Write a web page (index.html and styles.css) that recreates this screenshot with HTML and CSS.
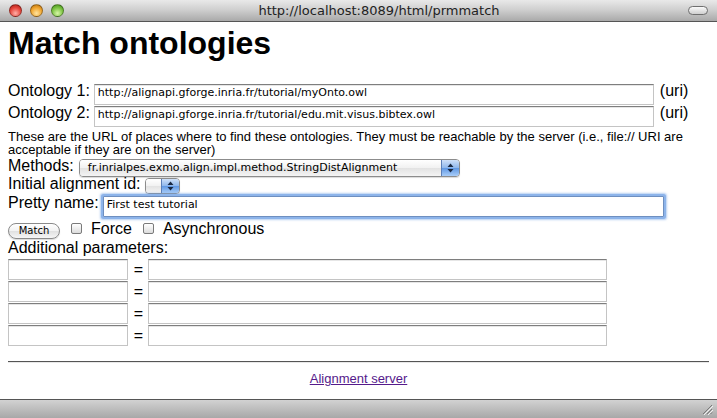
FILE: index.html
```html
<!DOCTYPE html>
<html lang="en">
<head>
    <meta charset="UTF-8">
    <meta name="viewport" content="width=device-width, initial-scale=1.0">
    <title>Match ontologies</title>
    <link rel="stylesheet" href="styles.css">
</head>
<body>
    <div class="window">
        <div class="titlebar">
            <div class="lights">
                <span class="light red"></span>
                <span class="light amber"></span>
                <span class="light green"></span>
            </div>
            <div class="title">http://localhost:8089/html/prmmatch</div>
            <span class="pill"></span>
        </div>

        <div class="page">
            <h1>Match ontologies</h1>
            <form class="match-form">
                <div class="field">
                    <label for="onto1">Ontology 1:</label>
                    <input class="text uri" id="onto1" value="http://alignapi.gforge.inria.fr/tutorial/myOnto.owl">
                    <span class="uri-hint">(uri)</span>
                </div>
                <div class="field">
                    <label for="onto2">Ontology 2:</label>
                    <input class="text uri" id="onto2" value="http://alignapi.gforge.inria.fr/tutorial/edu.mit.visus.bibtex.owl">
                    <span class="uri-hint">(uri)</span>
                </div>
                <p class="help">These are the URL of places where to find these ontologies. They must be reachable by the server (i.e., file:// URI are acceptable if they are on the server)</p>

                <div class="field methods-row">
                    <label>Methods:</label>
                    <div class="popup popup-methods">
                        <span class="popup-text">fr.inrialpes.exmo.align.impl.method.StringDistAlignment</span>
                        <span class="popup-arrows">
                            <svg width="7" height="10" viewBox="0 0 7 10"><path d="M3.5 0.5 L6.5 4 H0.5 Z M3.5 9.5 L6.5 6 H0.5 Z" fill="#1b2a44"/></svg>
                        </span>
                    </div>
                </div>
                <div class="field init-row">
                    <label>Initial alignment id:</label>
                    <div class="popup popup-small">
                        <span class="popup-text">&nbsp;</span>
                        <span class="popup-arrows">
                            <svg width="7" height="10" viewBox="0 0 7 10"><path d="M3.5 0.5 L6.5 4 H0.5 Z M3.5 9.5 L6.5 6 H0.5 Z" fill="#1b2a44"/></svg>
                        </span>
                    </div>
                </div>
                <div class="field pretty-row">
                    <label for="pretty">Pretty name:</label>
                    <input class="text pretty focused" id="pretty" value="First test tutorial">
                </div>
                <div class="field match-row">
                    <button type="submit" class="match-btn">Match</button>
                    <span class="checkbox"></span>
                    <span class="check-label">Force</span>
                    <span class="checkbox"></span>
                    <span class="check-label">Asynchronous</span>
                </div>
                <div class="params-title">Additional parameters:</div>
                <div class="params">
                    <input class="text param-key"><span class="eq">=</span><input class="text param-value">
                    <input class="text param-key"><span class="eq">=</span><input class="text param-value">
                    <input class="text param-key"><span class="eq">=</span><input class="text param-value">
                    <input class="text param-key"><span class="eq">=</span><input class="text param-value">
                </div>
            </form>
            <hr class="rule">
            <p class="footer"><a href="#">Alignment server</a></p>
        </div>

        <div class="statusbar">
            <svg class="grip" width="12" height="12" viewBox="0 0 12 12">
                <path d="M11 2 L2 11 M11 6 L6 11 M11 9.5 L9.5 11" stroke="#7a7a7a" stroke-width="1"/>
                <path d="M12 3 L3 12 M12 7 L7 12" stroke="#f0f0f0" stroke-width="1"/>
            </svg>
        </div>
    </div>
</body>
</html>
```

FILE: styles.css
```css
* {
    box-sizing: border-box;
}

body {
    margin: 0;
    font-family: "Liberation Sans", Arial, sans-serif;
    font-size: 16px;
    color: #000;
    background-color: #fff;
}

.window {
    width: 717px;
    height: 418px;
    display: flex;
    flex-direction: column;
    overflow: hidden;
}

/* title bar */
.titlebar {
    height: 22px;
    display: flex;
    align-items: center;
    padding: 0 9px 0 9px;
    background: linear-gradient(#e9e9e9, #d0d0d0 45%, #a9a9a9);
    border-bottom: 1px solid #555;
}

.lights {
    display: flex;
    gap: 8px;
}

.light {
    width: 13px;
    height: 13px;
    border-radius: 50%;
    border: 1px solid rgba(0, 0, 0, 0.35);
}

.light.red {
    background: radial-gradient(circle at 50% 75%, #ffb0a8, #e6463c 55%, #a61a12);
}

.light.amber {
    background: radial-gradient(circle at 50% 75%, #ffe4a0, #f0a630 55%, #b46b0a);
}

.light.green {
    background: radial-gradient(circle at 50% 75%, #d8f6a8, #7cc443 55%, #3f8a17);
}

.title {
    flex: 1;
    text-align: center;
    font-family: "DejaVu Sans", sans-serif;
    font-size: 13px;
    color: #222;
    padding-left: 6px;
}

.pill {
    width: 20px;
    height: 9px;
    border-radius: 5px;
    border: 1px solid #6f6f6f;
    background: linear-gradient(#fafafa, #cfcfcf);
}

/* page */
.page {
    flex: 1;
    padding: 0 8px;
    overflow: hidden;
}

h1 {
    font-size: 32px;
    line-height: 36px;
    margin: 3px 0 0;
}

.match-form {
    margin-top: 21px;
}

.field {
    display: flex;
    align-items: baseline;
    gap: 4px;
    height: 22px;
}

.field label,
.check-label,
.uri-hint,
.params-title {
    line-height: 18px;
}

.uri-hint {
    margin-left: 2px;
}

.text {
    height: 21px;
    padding: 0 3px 4px;
    font-family: "DejaVu Sans", sans-serif;
    font-size: 11px;
    color: #000;
    background: #fff;
    border: 1px solid #c4c4c4;
    border-top-color: #7e7e7e;
    box-shadow: inset 0 1px 0 #e6e6e6;
    border-radius: 0;
    outline: none;
}

.uri {
    width: 560px;
}

.help {
    margin: 4px 0 0;
    font-size: 13px;
    line-height: 13.3px;
}

.methods-row {
    height: 18px;
}

.init-row {
    height: 19px;
}

.pretty-row {
    height: 26px;
}

.match-row {
    height: 19px;
    gap: 0;
}

/* select popups */
.popup {
    display: inline-flex;
    border: 1px solid #8c8c8c;
    border-radius: 4px;
    overflow: hidden;
    box-shadow: 0 1px 1px rgba(0, 0, 0, 0.15);
}

.popup-text {
    flex: 1;
    font-family: "DejaVu Sans", sans-serif;
    font-size: 11px;
    line-height: 16px;
    padding: 0 8px;
    white-space: nowrap;
    background: linear-gradient(#ffffff, #f1f1f1 50%, #e2e2e2 51%, #f4f4f4);
}

.popup-arrows {
    width: 18px;
    display: flex;
    align-items: center;
    justify-content: center;
    border-left: 1px solid #5c7fb8;
    background: linear-gradient(#cfe0f8, #8db6ec 50%, #5f97e3 51%, #a9cdf8);
}

.popup-methods {
    width: 381px;
    height: 18px;
    margin-left: 1px;
}

.popup-small {
    width: 35px;
    height: 16px;
}

.popup-small .popup-text {
    line-height: 14px;
    padding: 0 4px;
}

.pretty {
    width: 561px;
}

.focused {
    border-color: #6e8fc0;
    box-shadow: 0 0 0 2px #8db4ea, 0 0 2px 3px rgba(110, 160, 230, 0.5);
    border-radius: 1px;
}

/* match row */
.match-btn {
    align-self: center;
    margin-top: 3px;
    width: 52px;
    height: 16px;
    padding: 0;
    font-family: "DejaVu Sans", sans-serif;
    font-size: 10px;
    color: #000;
    border: 1px solid #8a8a8a;
    border-radius: 8px;
    background: linear-gradient(#ffffff, #f2f2f2 50%, #e0e0e0 51%, #f6f6f6);
    box-shadow: 0 1px 1px rgba(0, 0, 0, 0.15);
}

.checkbox {
    align-self: flex-start;
    margin-top: 3px;
    width: 11px;
    height: 11px;
    border: 1px solid #7a7a7a;
    border-radius: 2px;
    background: linear-gradient(#ffffff, #dcdcdc);
}

.match-btn + .checkbox {
    margin-left: 11px;
}

.checkbox + .check-label {
    margin-left: 9px;
}

.check-label + .checkbox {
    margin-left: 11px;
}

.params-title {
    height: 18px;
}

/* additional parameters */
.params {
    margin-top: 2.6px;
    display: grid;
    grid-template-columns: 120px 20px 459px;
    grid-auto-rows: 21px;
    row-gap: 1px;
}

.param-key,
.param-value {
    width: 100%;
}

.eq {
    text-align: center;
    line-height: 21px;
    padding-left: 1px;
}

.rule {
    margin: 15px 0 0;
    border: 0;
    border-top: 1px solid #555;
    border-bottom: 1px solid #e8e8e8;
}

.footer {
    margin: 8px 0 0;
    text-align: center;
    font-size: 13px;
    line-height: 15px;
}

.footer a {
    color: #551a8b;
}

/* bottom bar */
.statusbar {
    height: 19px;
    display: flex;
    justify-content: flex-end;
    align-items: flex-end;
    padding: 0 4px 3px 0;
    border-top: 1px solid #555;
    background: linear-gradient(#d2d2d2, #a8a8a8);
}
```
